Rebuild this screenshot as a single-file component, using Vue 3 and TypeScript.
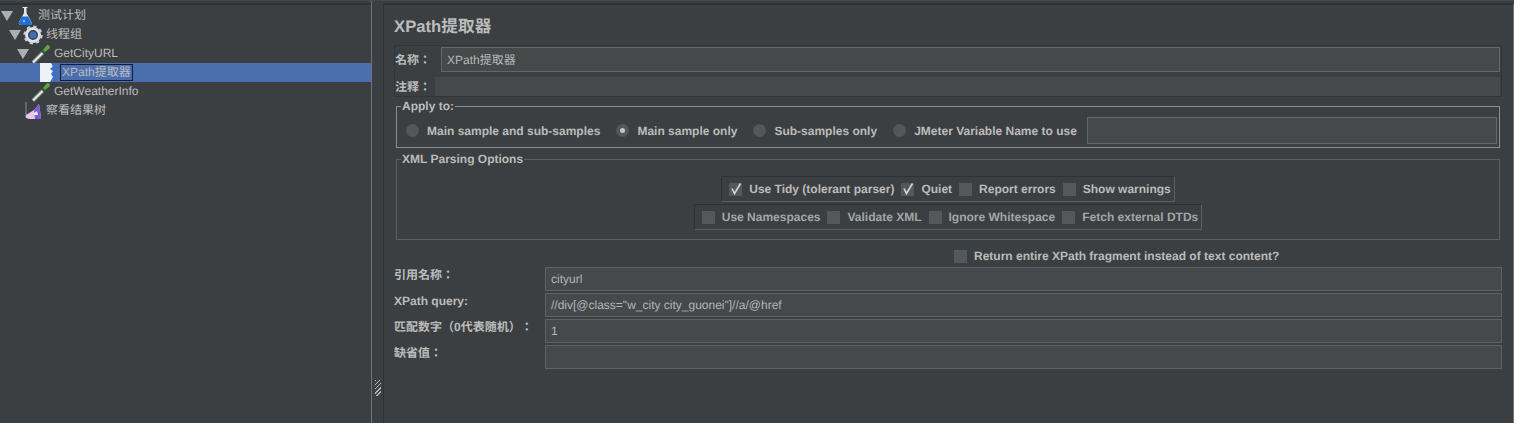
<template>
  <div class="app">
    <div class="tree">
      <div v-for="n in nodes" :key="n.label" class="tree-row" :class="{ selected: n.selected }" :style="{ paddingLeft: n.indent + 'px' }">
        <span class="arrow" :class="{ hidden: !n.open }"></span>
        <svg class="node-icon" width="20" height="20" viewBox="0 0 20 20">
          <template v-if="n.icon === 'flask'">
            <path d="M7.5 1h5v1h-1v5l5 9q1 3-2 3H6q-3 0-2-3l5-9V2H7.5z" fill="#dfe6ee" />
            <path d="M7 10.500h6l3.500 6q.5 2.500-2 2.500H6q-2.500 0-2-2.500z" fill="#1b6fd6" />
            <circle cx="9" cy="15" r="1.300" fill="#7db4f0" />
          </template>
          <template v-else-if="n.icon === 'gear'">
            <circle cx="10" cy="10" r="6.500" fill="none" stroke="#dde3ea" stroke-width="3" />
            <circle cx="10" cy="10" r="8.300" fill="none" stroke="#c7ced6" stroke-width="2.600" stroke-dasharray="3.200 3.320" />
            <circle cx="10" cy="10" r="3.600" fill="#3f6fb5" />
          </template>
          <template v-else-if="n.icon === 'dropper'">
            <path d="M2 18.500L12 8.500" stroke="#727c74" stroke-width="4" />
            <path d="M2 18.500L12 8.500" stroke="#e6ebe6" stroke-width="2" />
            <path d="M10.500 6.500l3 3" stroke="#2f5f2a" stroke-width="2" />
            <path d="M12 6l4-5q3 0 3 3l-5 4z" fill="#5aa843" />
          </template>
          <template v-else-if="n.icon === 'doc'">
            <path d="M1 0h11l2 3-3 3 3 2-2 3 2 3-3 5H1z" fill="#eef2f6" />
            <path d="M12 2l3 1-3 3 3 2-2 3 2 3-3 4h4V2z" fill="#2f73d8" />
          </template>
          <template v-else>
            <path d="M3 1v16" stroke="#8a8f92" stroke-width="1" />
            <path d="M3 14l8-5 5-6 2 13q0 2-2 2H7q-5 0-4-4z" fill="#eac6ec" />
            <path d="M11 9l5-6 2 13q0 2-2 2h-4z" fill="#7461cf" />
            <path d="M11 12l3-2 1 4h-4z" fill="#f4e6f5" />
          </template>
        </svg>
        <span class="node-label" :class="{ boxed: n.selected }">{{ n.label }}</span>
      </div>
    </div>

    <div class="divider">
      <div class="grip"></div>
    </div>

    <div class="panel">
      <h1 class="title">XPath提取器</h1>

      <div class="name-block">
        <div class="name-row">
          <label class="cjk-label name-label">名称：</label>
          <div class="field">XPath提取器</div>
        </div>
        <div class="comment-row">
          <label class="cjk-label comment-label">注释：</label>
          <div class="comment-field"></div>
        </div>
      </div>

      <fieldset class="group apply">
        <legend>Apply to:</legend>
        <div class="apply-row">
          <label v-for="r in radios" :key="r.label" class="opt radio-opt">
            <span class="radio" :class="{ on: r.on }"></span>{{ r.label }}
          </label>
          <div class="field var-field"></div>
        </div>
      </fieldset>

      <fieldset class="group xml">
        <legend>XML Parsing Options</legend>
        <div class="check-box first">
          <label v-for="c in tidyOpts" :key="c.label" class="opt check-opt">
            <span class="check">
              <svg v-if="c.on" width="13" height="13" viewBox="0 0 13 13"><path d="M3 5.500l2.500 5L11.500 .5" fill="none" stroke="#d4d6d6" stroke-width="1.600" /></svg>
            </span>{{ c.label }}
          </label>
        </div>
        <div class="check-box second">
          <label v-for="c in nsOpts" :key="c" class="opt check-opt dim">
            <span class="check"></span>{{ c }}
          </label>
        </div>
      </fieldset>

      <div class="fragment">
        <label class="opt check-opt"><span class="check"></span>Return entire XPath fragment instead of text content?</label>
      </div>

      <div class="form">
        <div v-for="f in fields" :key="f.label" class="form-row">
          <label class="cjk-label form-label">{{ f.label }}</label>
          <div class="field form-field">{{ f.value }}</div>
        </div>
      </div>
    </div>
  </div>
</template>

<script setup lang="ts">
const nodes = [
  { label: '测试计划', indent: 1, open: true, icon: 'flask' },
  { label: '线程组', indent: 9, open: true, icon: 'gear' },
  { label: 'GetCityURL', indent: 17, open: true, icon: 'dropper' },
  { label: 'XPath提取器', indent: 25, open: false, icon: 'doc', selected: true },
  { label: 'GetWeatherInfo', indent: 17, open: false, icon: 'dropper' },
  { label: '察看结果树', indent: 9, open: false, icon: 'chart' },
]

const radios = [
  { label: 'Main sample and sub-samples', on: false },
  { label: 'Main sample only', on: true },
  { label: 'Sub-samples only', on: false },
  { label: 'JMeter Variable Name to use', on: false },
]

const tidyOpts = [
  { label: 'Use Tidy (tolerant parser)', on: true },
  { label: 'Quiet', on: true },
  { label: 'Report errors', on: false },
  { label: 'Show warnings', on: false },
]

const nsOpts = ['Use Namespaces', 'Validate XML', 'Ignore Whitespace', 'Fetch external DTDs']

const fields = [
  { label: '引用名称：', value: 'cityurl' },
  { label: 'XPath query:', value: '//div[@class="w_city city_guonei"]//a/@href' },
  { label: '匹配数字（0代表随机）：', value: '1' },
  { label: '缺省值：', value: '' },
]
</script>

<style>
html, body {
  margin: 0;
  background: #3c3f41;
}
</style>

<style scoped>
.app {
  display: flex;
  width: 1514px;
  height: 423px;
  overflow: hidden;
  background: #3c3f41;
  color: #bbbbbb;
  font-family: "Liberation Sans", "Noto Sans CJK TC", sans-serif;
  font-size: 12px;
  text-rendering: geometricPrecision;
  text-spacing-trim: space-all;
  box-sizing: border-box;
  border-top: 1px solid #45484a;
}
.tree {
  width: 371px;
  flex: none;
  padding-top: 1px;
  border-top: 2px solid #303335;
  margin-top: 2px;
  box-sizing: border-box;
}
.tree-row {
  display: flex;
  align-items: center;
  height: 19px;
  box-sizing: border-box;
  white-space: nowrap;
}
.tree-row.selected {
  background: #4b6eaf;
}
.arrow {
  width: 0;
  height: 0;
  flex: none;
  border-left: 6px solid transparent;
  border-right: 6px solid transparent;
  border-top: 10px solid #a9b0b5;
}
.arrow.hidden {
  visibility: hidden;
}
.node-icon {
  flex: none;
  margin: 0 1px 0 2px;
}
.node-label {
  padding: 0 1px;
  border: 1px solid transparent;
  line-height: 15px;
}
.node-label.boxed {
  border-color: #10203c;
}
.divider {
  width: 12px;
  flex: none;
  border-left: 1px solid #6f7375;
  display: flex;
  align-items: flex-end;
  justify-content: center;
  padding-bottom: 27px;
  box-sizing: border-box;
}
.grip {
  width: 6px;
  height: 16px;
  background: repeating-linear-gradient(135deg, #b5b8ba 0 1px, #3c3f41 1px 3px);
}
.panel {
  flex: 1;
  min-width: 0;
  border-top: 2px solid #2f3234;
  border-left: 1px solid #2f3234;
  border-right: 1px solid #6f7375;
  margin-top: 2px;
  padding: 11px 0 0 10px;
  box-sizing: border-box;
}
.title {
  margin: 0 0 7px;
  font-size: 16.7px;
  line-height: 22px;
  font-weight: bold;
  color: #bbbbbb;
}
.name-block {
  display: flex;
  flex-direction: column;
  gap: 5px;
  width: 1108px;
  box-sizing: border-box;
  padding: 1px 1px 0 0;
  border: 1px solid #323537;
}
.name-row, .comment-row {
  display: flex;
  align-items: center;
}
.cjk-label {
  font-weight: bold;
  color: #bbbbbb;
  white-space: nowrap;
}
.name-label {
  width: 46px;
}
.comment-label {
  width: 40px;
}
.field {
  box-sizing: border-box;
  border: 1px solid #646769;
  background: #45494a;
  color: #b4b6b6;
  padding: 0 5px;
  display: flex;
  align-items: center;
  white-space: nowrap;
}
.name-row .field {
  flex: 1;
  height: 25px;
}
.comment-field {
  flex: 1;
  height: 19px;
  background: #45494a;
}
.group {
  margin: 0;
  padding: 0;
  border: 1px solid #8c8f90;
  width: 1104px;
  box-sizing: border-box;
  min-inline-size: 0;
}
.group legend {
  margin-left: 4px;
  padding: 0 1px;
  font-weight: bold;
  line-height: 14px;
}
.apply {
  margin-top: 2px;
  margin-left: 2px;
  height: 49px;
}
.apply-row {
  display: flex;
  align-items: center;
  padding: 4px 2px 0 9px;
}
.opt {
  display: flex;
  align-items: center;
  font-weight: bold;
  white-space: nowrap;
}
.radio-opt {
  margin-right: 16px;
}
.radio {
  width: 13px;
  height: 13px;
  border-radius: 50%;
  background: #54575a;
  margin-right: 8px;
  display: flex;
  align-items: center;
  justify-content: center;
}
.radio.on::after {
  content: "";
  width: 5px;
  height: 5px;
  border-radius: 50%;
  background: #c6c8c8;
}
.var-field {
  flex: 1;
  height: 27px;
  margin-left: -6px;
}
.xml {
  margin-top: 4px;
  margin-left: 2px;
  height: 88px;
  border-color: #5c5f61;
  display: flex;
  flex-direction: column;
  align-items: center;
}
.check-box {
  display: flex;
  align-items: center;
  gap: 7px;
  height: 26px;
  padding: 0 3px 0 7px;
  box-sizing: border-box;
  border: 1px solid #2f3234;
  border-right-color: #5c5f61;
  border-bottom-color: #5c5f61;
}
.check-box.first {
  margin-top: 10px;
}
.check-box.second {
  margin-top: 2px;
}
.check {
  width: 13px;
  height: 13px;
  background: #55585a;
  margin-right: 7px;
  flex: none;
  display: block;
}
.dim {
  color: #a3a5a6;
}
.fragment {
  display: flex;
  padding: 5px 0 0 560px;
  height: 22px;
}
.form {
  display: flex;
  flex-direction: column;
  gap: 2px;
  width: 1108px;
}
.form-row {
  display: flex;
  height: 24px;
}
.form-label {
  width: 151px;
  flex: none;
  line-height: 16px;
}
.form-field {
  flex: 1;
  height: 24px;
  border-color: #5f6264;
}
</style>
